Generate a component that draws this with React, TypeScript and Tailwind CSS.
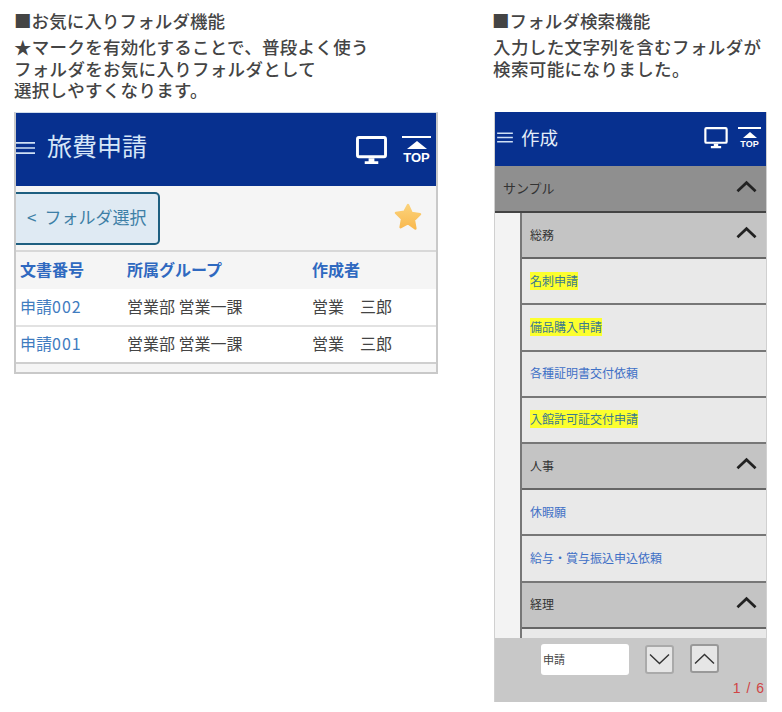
import React from "react";

const jp = { fontFamily: '"Noto Sans CJK JP", "Noto Sans", sans-serif' };

const Hamburger = ({ className }: { className: string }) => (
  <svg className={className} viewBox="0 0 20 14" fill="none" stroke="#cfe0f5" strokeWidth="1.8">
    <path d="M0 1.5h20M0 7h20M0 12.5h20" />
  </svg>
);

const Monitor = ({ className }: { className: string }) => (
  <svg className={className} viewBox="0 0 32 30" fill="none">
    <rect x="1.5" y="1.5" width="29" height="20" rx="1.5" stroke="#fff" strokeWidth="3" />
    <path d="M13 23h6v3h4v3H9v-3h4z" fill="#fff" />
  </svg>
);

const TopIcon = ({ className }: { className: string }) => (
  <div className={`flex flex-col items-center ${className}`}>
    <div className="h-[2px] w-full bg-white" />
    <div className="mt-[3px] h-0 w-0 border-x-[10px] border-b-[8px] border-x-transparent border-b-white" />
    <span className="mt-[2px] font-['Liberation_Sans',sans-serif] text-[13px] leading-none font-bold text-white">TOP</span>
  </div>
);

const Chevron = ({ up = true, className }: { up?: boolean; className: string }) => (
  <svg className={className} viewBox="0 0 22 13" fill="none" stroke="currentColor" strokeWidth="2.8">
    <path d={up ? "M1.5 11.5 11 2.5l9.5 9" : "M1.5 1.5 11 10.5l9.5-9"} />
  </svg>
);

const Group = ({ label }: { label: string }) => (
  <div className="flex h-[46.2px] items-center justify-between border-b-2 border-[#666] bg-[#c4c4c4] pr-[9px] pl-[8px] text-[12px] text-[#333]">
    <span className="mb-px">{label}</span>
    <Chevron className="mb-[5px] h-[13px] w-[21px] text-[#222]" />
  </div>
);

const Item = ({ label, hit }: { label: string; hit?: boolean }) => (
  <div className="flex h-[46.2px] items-center border-b-2 border-[#777] bg-[#e9e9e9] pb-px pl-[8px] text-[12px] text-[#3f70c6]">
    <span className={hit ? "bg-[#fcff2e] text-[#3c7a8e]" : ""}>{label}</span>
  </div>
);

const rows = ["002", "001"];

export default function App() {
  return (
    <div className="flex h-[712px] w-[782px] overflow-hidden bg-white pt-[10px] pl-[14px] text-[#444]" style={jp}>
      <div className="w-[424px]">
        <div className="h-[21px] text-[17.5px] leading-[21px] font-medium tracking-[0.1px]">■お気に入りフォルダ機能</div>
        <div className="mt-[5px] h-[76px] text-[17.5px] leading-[21.5px] font-medium tracking-[0.3px]">
          <div className="whitespace-nowrap">★マークを有効化することで、普段よく使う</div>
          <div className="whitespace-nowrap">フォルダをお気に入りフォルダとして</div>
          <div className="whitespace-nowrap">選択しやすくなります。</div>
        </div>

        <div className="h-[262px] border-2 border-t border-[#c9c9c9] border-t-[#cfdcec] bg-[#f5f5f5]">
          <div className="flex h-[73px] items-center bg-[#07308f] pr-[5px]">
            <Hamburger className="mb-[3px] h-[14px] w-[19px]" />
            <span className="mb-[7px] ml-[12px] text-[25px] text-[#d6e6f8]">旅費申請</span>
            <Monitor className="mt-px ml-auto h-[29px] w-[31px]" />
            <TopIcon className="ml-[15px] w-[29px]" />
          </div>
          <div className="flex h-[66px] items-center justify-between border-b-2 border-[#d8d8d8] pr-[13px]">
            <div className="flex h-[53px] w-[144px] items-center gap-[8px] rounded-r-[5px] border-2 border-l-0 border-[#1e5f80] bg-[#dfeaf3] pb-[2px] pl-[11px] text-[17px] text-[#3d7fa6]">
              <span>&lt;</span>
              <span>フォルダ選択</span>
            </div>
            <svg className="mb-[3px] h-[30px] w-[30px]" viewBox="0 0 24 24">
              <defs>
                <linearGradient id="star" x1="0" y1="0" x2="0" y2="1">
                  <stop offset="0" stopColor="#fbd27a" />
                  <stop offset="1" stopColor="#f9b94f" />
                </linearGradient>
              </defs>
              <path
                d="M12 2.500l2.900 6.300 6.700.9-4.900 4.700 1.200 6.800L12 17l-5.900 3.200 1.200-6.800-4.900-4.700 6.700-.9z"
                fill="url(#star)"
                stroke="url(#star)"
                strokeWidth="2"
                strokeLinejoin="round"
              />
            </svg>
          </div>
          <div className="flex h-[37px] items-center pb-[3px] text-[16px] font-bold text-[#2f69c0]">
            <span className="ml-[4px] w-[107px]">文書番号</span>
            <span className="w-[185px]">所属グループ</span>
            <span>作成者</span>
          </div>
          {rows.map((r) => (
            <div key={r} className="flex h-[37.500px] items-center border-b-2 border-[#e2e2e2] bg-white pb-[2px] text-[16px] last:border-[#cfcfcf]">
              <span className="ml-[4px] w-[107px] text-[#3f7cc0]">
                申請<span className="tracking-[1px]">{r}</span>
              </span>
              <span className="w-[185px]">営業部 営業一課</span>
              <span>営業　三郎</span>
            </div>
          ))}
        </div>
      </div>

      <div className="ml-[56px] w-[273px]">
        <div className="-ml-[2px] h-[21px] text-[17.5px] leading-[21px] font-medium tracking-[0.1px]">■フォルダ検索機能</div>
        <div className="-ml-px mt-[5px] h-[76px] text-[17.5px] leading-[21.5px] font-medium tracking-[0.4px]">
          <div className="whitespace-nowrap">入力した文字列を含むフォルダが</div>
          <div className="whitespace-nowrap">検索可能になりました。</div>
        </div>

        <div className="flex h-[590px] flex-col border-x border-[#d0d0d0] bg-[#f3f3f3]">
          <div className="flex h-[54px] flex-none items-center bg-[#07308f] pr-[5px] pb-[3px] pl-[2px]">
            <Hamburger className="h-[11px] w-[16px]" />
            <span className="ml-[8px] text-[18.500px] text-[#e4edf8]">作成</span>
            <Monitor className="ml-auto h-[22px] w-[24px]" />
            <TopIcon className="ml-[10px] w-[23px] [&>div:nth-child(2)]:border-x-[7px] [&>div:nth-child(2)]:border-b-[6px] [&>span]:text-[9px]" />
          </div>
          <div className="flex h-[47px] flex-none items-center justify-between border-b-2 border-[#444] bg-[#8f8f8f] pr-[9px] pl-[8px] text-[13px] text-[#333]">
            <span className="mb-px">サンプル</span>
            <Chevron className="mb-[4px] h-[13px] w-[21px] text-[#222]" />
          </div>
          <div className="min-h-0 flex-1 overflow-hidden pl-[25px]">
            <div className="border-l-2 border-[#777]">
              <Group label="総務" />
              <Item label="名刺申請" hit />
              <Item label="備品購入申請" hit />
              <Item label="各種証明書交付依頼" />
              <Item label="入館許可証交付申請" hit />
              <Group label="人事" />
              <Item label="休暇願" />
              <Item label="給与・賞与振込申込依頼" />
              <Group label="経理" />
              <Item label="" />
            </div>
          </div>
          <div className="relative flex h-[64px] flex-none items-start bg-[#c8c8c8] pt-[6px] pl-[46px] text-[11px]">
            <div className="flex h-[31px] w-[88px] items-center rounded-[3px] bg-white pl-[2px] text-[#444]">申請</div>
            <div className="mt-px ml-[16px] flex h-[29px] w-[29px] items-center justify-center rounded-[3px] border-2 border-[#aaa] bg-[#e6e6e6]">
              <Chevron up={false} className="h-[13px] w-[23px] text-[#333] [&>path]:[stroke-width:1.400]" />
            </div>
            <div className="ml-[16px] flex h-[29px] w-[29px] items-center justify-center rounded-[3px] border-2 border-[#999] bg-[#e6e6e6]">
              <Chevron className="h-[13px] w-[23px] text-[#333] [&>path]:[stroke-width:1.400]" />
            </div>
            <span className="absolute right-[1px] bottom-[7px] font-['Liberation_Sans',sans-serif] text-[14px] leading-none tracking-[1px] text-[#d04545]">1 / 6</span>
          </div>
        </div>
      </div>
    </div>
  );
}
